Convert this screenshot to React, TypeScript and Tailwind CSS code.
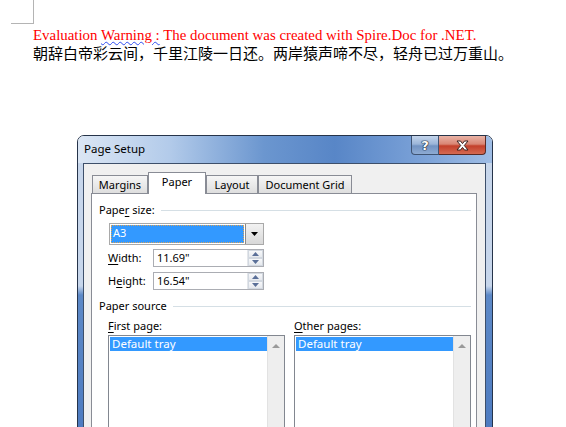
import React from "react";

const ui = "font-['Noto_Sans','Liberation_Sans',sans-serif] text-[11px] text-black";

function Mn({ children }: { children: React.ReactNode }) {
  return <span className="underline underline-offset-2">{children}</span>;
}

function SectionHeader({ children }: { children: React.ReactNode }) {
  return (
    <div className="flex items-center h-[16px] pl-[7px] pr-[5px]">
      <span className="leading-[16px]">{children}</span>
      <div className="flex-1 h-px bg-[#d5dfe5] ml-[6px]" />
    </div>
  );
}

function Spinner() {
  return (
    <div className="flex flex-col w-[16px] h-[16px] border-l border-[#e3e6ea]">
      {[0, 1].map(i => (
        <div key={i} className="flex-1 flex items-center justify-center bg-[linear-gradient(180deg,#f7f8fa,#e6e9ee)] border border-[#d2d8e0]">
          <svg width="7" height="4" viewBox="0 0 7 4">
            {i === 0 ? <path d="M3.5 0 L7 4 L0 4 Z" fill="#5a6f98" /> : <path d="M0 0 L7 0 L3.5 4 Z" fill="#5a6f98" />}
          </svg>
        </div>
      ))}
    </div>
  );
}

function NumField({ label, value }: { label: React.ReactNode; value: string }) {
  return (
    <div className="flex items-center pl-[16px]">
      <div className="w-[45px] leading-[16px]">{label}</div>
      <div className="flex items-center w-[111px] h-[18px] border border-[#abadb3] bg-white">
        <span className="flex-1 pl-[3px] leading-[16px]">{value}</span>
        <Spinner />
      </div>
    </div>
  );
}

function ListBox({ label }: { label: React.ReactNode }) {
  return (
    <div className="flex flex-col w-[177px]">
      <div className="leading-[16px] h-[16px]">{label}</div>
      <div className="mt-px flex h-[120px] border border-[#828790] bg-white">
        <div className="flex-1 pt-px pl-px">
          <div className="h-[14px] bg-[#3399ff] text-white leading-[14px] pl-[2px] text-[11.5px]">Default tray</div>
        </div>
        <div className="w-[17px] bg-[#eeeeee] border-l border-[#e2e2e2] flex justify-center pt-[8px]">
          <svg width="8" height="4" viewBox="0 0 8 4">
            <path d="M4 0 L8 4 L0 4 Z" fill="#9a9a9a" />
          </svg>
        </div>
      </div>
    </div>
  );
}

function Tab({ label, selected, w }: { label: string; selected?: boolean; w: string }) {
  return (
    <div
      className={
        "flex items-center justify-center border border-[#898c95] " +
        w +
        (selected
          ? " h-[22px] bg-white border-b-0 pb-[2px]"
          : " h-[19px] bg-[linear-gradient(180deg,#f6f6f6,#dedede)] pt-[1px]")
      }
    >
      {label}
    </div>
  );
}

function PageSetup() {
  return (
    <div className={"ml-[77px] w-[416px] border border-[#26344a] rounded-t-[7px] overflow-hidden " + ui}>
      {/* titelbalk */}
      <div className="h-[27px] flex justify-between items-start bg-[linear-gradient(90deg,#dbe6f4_0%,#b3cbea_22%,#6b96cf_45%,#5886c7_62%,#7ea4d9_85%,#9fbde5_100%)]">
        <span className="self-center pl-[6px] text-[11.5px] leading-[16px] -mt-px">Page Setup</span>
        <div className="flex mr-[6px]">
          <div className="w-[28px] h-[19px] flex items-center justify-center border border-[#3f5473] border-t-0 rounded-bl-[4px] bg-[linear-gradient(180deg,#c4d5ec_0%,#9bb5d8_45%,#7293c2_55%,#8eabd3_100%)]">
            <span className="font-['DejaVu_Sans',sans-serif] font-bold text-[13px] text-white leading-none [text-shadow:0_0_1px_#1c2636,0_0_1px_#1c2636,0_0_1px_#1c2636,0_0_1px_#1c2636]">?</span>
          </div>
          <div className="w-[47px] h-[19px] flex items-center justify-center border border-[#5a2a24] border-t-0 border-l-0 rounded-br-[4px] bg-[linear-gradient(180deg,#e9b3a6_0%,#d98674_45%,#c3402b_55%,#d56a52_100%)]">
            <svg width="13" height="11" viewBox="0 0 13 11">
              <path
                d="M1 1 H4.5 L6.5 3.6 L8.5 1 H12 L8.3 5.5 L12 10 H8.5 L6.5 7.4 L4.5 10 H1 L4.7 5.5 Z"
                fill="#ffffff"
                stroke="#3a2220"
                strokeWidth="1"
                strokeLinejoin="round"
              />
            </svg>
          </div>
        </div>
      </div>

      {/* frame + client */}
      <div className="flex pl-[5px] pr-[6px] bg-[linear-gradient(180deg,#c7d6eb_0%,#c7d6eb_41%,#5d89c7_44%,#4a78bf_100%)]">
        <div className="flex-1 h-[300px] border border-[#3d4f6a] bg-[#f0f0f0] pt-[8px] pl-[7px] pr-[8px]">
          <div className="relative z-10 flex items-end h-[22px] mb-[-1px] pl-[1px]">
            <Tab label="Margins" w="w-[56px]" />
            <Tab label="Paper" w="w-[58px]" selected />
            <Tab label="Layout" w="w-[52px]" />
            <Tab label="Document Grid" w="w-[94px]" />
          </div>
          <div className="border border-[#898c95] bg-white h-[300px] pt-[8px]">
            <SectionHeader>
              Pape<Mn>r</Mn> size:
            </SectionHeader>

            <div className="mt-[5px] ml-[17px] flex w-[155px] h-[22px] border border-[#a9a9a9] bg-white">
              <div className="flex-1 p-px">
                <div className="h-full bg-[#3399ff] border border-dotted border-[#d9a35a] text-white leading-[14px] pl-px">A3</div>
              </div>
              <div className="w-[18px] flex items-center justify-center border-l border-[#8a8a8a] bg-[linear-gradient(180deg,#f2f2f2,#d8d8d8)]">
                <svg width="7" height="4" viewBox="0 0 7 4">
                  <path d="M0 0 L7 0 L3.5 4 Z" fill="#000" />
                </svg>
              </div>
            </div>

            <div className="mt-[4px]">
              <NumField label={<><Mn>W</Mn>idth:</>} value={'11.69"'} />
            </div>
            <div className="mt-[5px]">
              <NumField label={<>H<Mn>e</Mn>ight:</>} value={'16.54"'} />
            </div>

            <div className="mt-[8px]">
              <SectionHeader>Paper source</SectionHeader>
            </div>

            <div className="mt-[4px] pl-[16px] flex gap-[9px]">
              <ListBox label={<><Mn>F</Mn>irst page:</>} />
              <ListBox label={<><Mn>O</Mn>ther pages:</>} />
            </div>
          </div>
        </div>
      </div>
    </div>
  );
}

export default function App() {
  return (
    <div className="w-[566px] h-[427px] overflow-hidden bg-white">
      {/* hoekmarkering */}
      <div className="ml-[11px] w-[23px] h-[24px] border-r border-b border-[#b4b4b4]" />
      <div className="pl-[33px] mt-[2px]">
        <div className="h-[18px] leading-[18px] text-[14.9px] text-[#ff0000] font-['Liberation_Serif',serif] whitespace-nowrap">
          Evaluation{" "}
          <span className="underline decoration-wavy decoration-[#2d4cf0] decoration-[1px] underline-offset-[1px]">Warning :</span> The
          document was created with Spire.Doc for .NET.
        </div>
        <div className="h-[18px] leading-[18px] text-[15px] text-black font-['Noto_Sans_CJK_SC',sans-serif] whitespace-nowrap [text-spacing-trim:space-all]">
          朝辞白帝彩云间，千里江陵一日还。两岸猿声啼不尽，轻舟已过万重山。
        </div>
      </div>
      <div className="mt-[73px]">
        <PageSetup />
      </div>
    </div>
  );
}
